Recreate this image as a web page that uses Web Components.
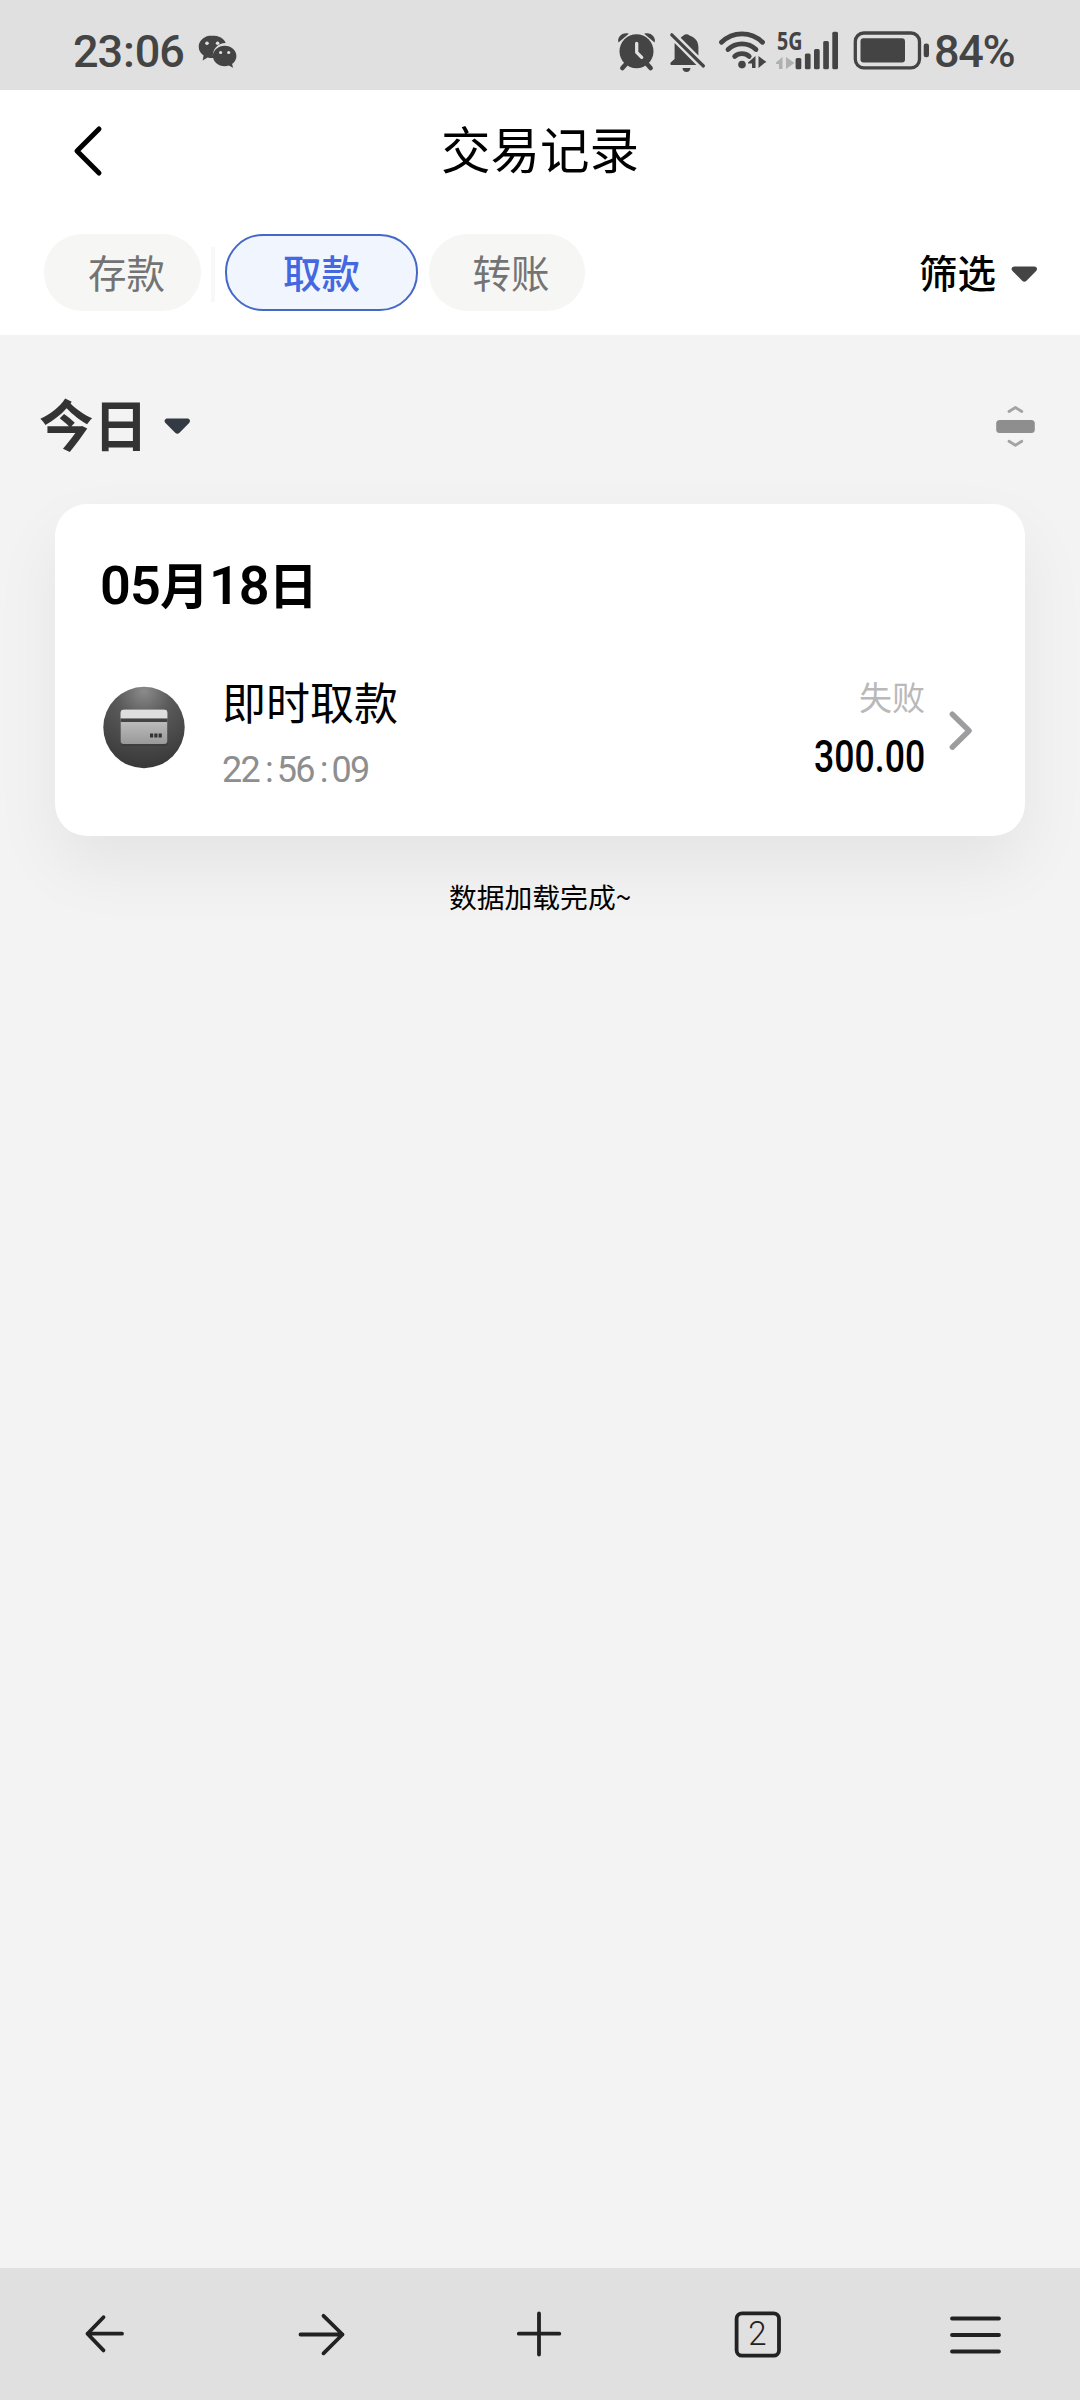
<!DOCTYPE html>
<html lang="zh-CN">
<head>
<meta charset="utf-8">
<title>交易记录</title>
<style>
html,body{margin:0;padding:0}
body{width:1080px;height:2400px;overflow:hidden;background:#f3f3f3;font-family:Roboto,"Noto Sans CJK SC",sans-serif;color:#000}
</style>
</head>
<body>
<record-page></record-page>
<script>
function define(name, html){
  const t=document.createElement('template');
  t.innerHTML=html;
  customElements.define(name,class extends HTMLElement{
    constructor(){super();this.attachShadow({mode:'open'}).append(t.content.cloneNode(true));}
  });
}

/* Icons: [x, y, width, height, markup]; the first four form the viewBox. */
const ICONS={
  wechat:[197,33,42,38,`<path fill="#444" d="M212 35.5c-7.4 0-13.3 4.9-13.3 11.2 0 3.8 2 6.6 4.9 8.8l-1 5 5-3.1c1.600.5 3 .6 4.700.6h1c-2-7.600 4-14.900 12.400-15 -1.300-4.400-7-7.500-13.700-7.500z"/><path fill="#444" d="M224.700 45.700c-6.400 0-11.800 4.400-11.800 10.200s5.400 10.300 11.800 10.300c1.500 0 2.900-.2 4.100-.6l4.300 2.100-1-3.800c2.600-1.900 4.300-4.700 4.300-8 0-5.800-5.200-10.200-11.700-10.200z"/><g fill="#e0e0e0"><circle cx="207" cy="43.300" r="1.800"/><circle cx="217.600" cy="43.300" r="1.800"/><circle cx="220.600" cy="52.500" r="1.600"/><circle cx="228.700" cy="52.500" r="1.600"/></g>`],
  alarm:[617,31,40,42,`<g fill="#444"><circle cx="636.500" cy="51.300" r="17"/><path d="M618.500 42.500c-2-5 4-11 10.300-8.700z"/><path d="M654.500 42.500c2-5-4-11-10.300-8.700z"/></g><path d="M626 64l-3.600 4M647 64l3.600 4" stroke="#444" stroke-width="4.600" stroke-linecap="round"/><path d="M636.700 43.300v9l5 5" fill="none" stroke="#e0e0e0" stroke-width="3.300" stroke-linecap="round" stroke-linejoin="round"/>`],
  mute:[669,30,38,43,`<path fill="#444" d="M683.500 35.500a4 4 0 0 1 5.900 0c5.600 1.600 9 6 9 11.500v8.500l-17.700-17.800c.8-1 1.700-1.700 2.800-2.200zM674.600 43l21.800 22H671c-1-1-.8-2.300.2-3.100l3.400-3z"/><path fill="#444" d="M682.500 68h8c-.3 2.500-1.700 4-4 4s-3.800-1.500-4-4z"/><path d="M671.800 34.800l31.600 31.200" stroke="#444" stroke-width="3.200" stroke-linecap="round"/>`],
  wifi:[718,30,50,42,`<g fill="none" stroke="#444" stroke-width="4.800" stroke-linecap="round"><path d="M721.500 42.300a29 29 0 0 1 41 0"/><path d="M728 49.500a20 20 0 0 1 28 0"/><path d="M734.700 56.400a11 11 0 0 1 14.500 0"/></g><circle cx="742" cy="64.600" r="3.800" fill="#444"/><path fill="#444" d="M748 62.500l7.500-6.500v12h-3.500v-4.500h-4zM758.500 56l8 6-2 1-6 5z"/>`],
  signal:[775,20,64,52,`<text x="777" y="50" font-family="Open Sans, sans-serif" font-weight="700" font-size="25" textLength="25.500" lengthAdjust="spacingAndGlyphs" fill="#444">5G</text><path fill="#b0b0b0" d="M776 62.500l6.500-5.500v12h-3.500v-5h-3zM786 57l8.500 6-1.500 1-7 5z"/><g fill="#444"><rect x="795.600" y="58" width="5.700" height="11.300" rx="1.500"/><rect x="804.900" y="53.500" width="5.700" height="15.800" rx="1.500"/><rect x="814" y="49" width="5.700" height="20.300" rx="1.500"/><rect x="823.200" y="41" width="5.700" height="28.300" rx="1.500"/><rect x="832.300" y="31.700" width="5.700" height="37.600" rx="1.500"/></g>`],
  battery:[852,30,79,42,`<rect x="855.300" y="33" width="64.200" height="34.800" rx="8.500" fill="none" stroke="#444" stroke-width="3.300"/><rect x="860.500" y="38.200" width="44.500" height="24.300" rx="3" fill="#444"/><rect x="923.700" y="43.500" width="5.300" height="13.700" rx="2.300" fill="#444"/>`],
  back:[70,120,40,62,`<path d="M100 129L78 151l22 22" fill="none" stroke="#000" stroke-width="5" stroke-linecap="round" stroke-linejoin="round"/>`],
  caret:[0,0,27,17,`<path d="M3.500.5h19.600c2.800 0 3.800 2.600 2 4.400L15.500 14.700c-1.500 1.400-2.900 1.400-4.300 0L1.500 4.900C-.3 3.100.7.500 3.500.5z" fill="currentColor"/>`],
  collapse:[995,404,41,45,`<rect x="996.200" y="420" width="38.600" height="13" rx="3.500" fill="#8e8e8e"/><path d="M1009 411.500l6.400-4 6.400 4M1009 441.300l6.400 4 6.400-4" fill="none" stroke="#a3a3a3" stroke-width="2.800" stroke-linecap="round" stroke-linejoin="round"/>`],
  card:[103,686,82,83,`<defs><radialGradient id="a" cx=".5" cy=".05" r=".95"><stop offset="0" stop-color="#8b8b8b"/><stop offset=".35" stop-color="#5b5b5b"/><stop offset="1" stop-color="#383838"/></radialGradient><linearGradient id="b" x1="0" y1="0" x2="0" y2="1"><stop offset="0" stop-color="#cecece"/><stop offset="1" stop-color="#999"/></linearGradient></defs><circle cx="144" cy="727.500" r="40.700" fill="url(#a)"/><rect x="121" y="711" width="47" height="35" rx="3" fill="#222" opacity=".25"/><rect x="120.700" y="709.700" width="46.600" height="34.300" rx="3" fill="url(#b)"/><path d="M120.700 718.500v-5.800a3 3 0 0 1 3-3h40.600a3 3 0 0 1 3 3v5.800z" fill="#dedede"/><path d="M120.700 718.500h46.600v3.500h-46.600z" fill="#424242"/><path d="M150 733.500h3.200v4H150zM154.300 733.500h3.200v4h-3.200zM158.600 733.500h3.200v4h-3.200z" fill="#333"/>`],
  next:[946,706,30,48,`<path d="M952.300 714.200l16.800 16.500-16.800 16.500" fill="none" stroke="#9d9d9f" stroke-width="5.400" stroke-linecap="round" stroke-linejoin="round"/>`],
  navBack:[0,2268,216,132,`<path d="M122 2333.700H87.500M103.500 2317.200L87.500 2333.700l16 16.700"/>`],
  navForward:[216,2268,216,132,`<path d="M300.500 2334.500h42M323.500 2315.800l19 18.700-19 18.800"/>`],
  navAdd:[432,2268,216,132,`<path d="M518.800 2333.700h40.500M539 2313.500v41"/>`],
  navTabs:[648,2268,216,132,`<rect x="736.600" y="2313.300" width="42.400" height="42.400" rx="5.500"/><text x="757.300" y="2345" text-anchor="middle" font-family="Roboto, sans-serif" font-weight="300" font-size="33" fill="#222" stroke="none">2</text>`],
  navMenu:[864,2268,216,132,`<path d="M952 2318.500h47M952 2335h47M952 2351.500h47"/>`]
};
customElements.define('ui-icon',class extends HTMLElement{
  connectedCallback(){
    if(this.shadowRoot)return;
    const n=this.getAttribute('name'),[x,y,w,h,m]=ICONS[n];
    const line=n.startsWith('nav')?'fill="none" stroke="#222" stroke-width="3.800" stroke-linecap="round" stroke-linejoin="round"':'';
    this.attachShadow({mode:'open'}).innerHTML=`<style>:host{display:block;flex:none;width:${w}px;height:${h}px}svg{display:block;overflow:visible}</style><svg width="${w}" height="${h}" viewBox="${x} ${y} ${w} ${h}" ${line}>${m}</svg>`;
  }
});

define('status-bar',`<style>
:host{display:flex;align-items:flex-start;height:90px;box-sizing:border-box;padding:20px 65px 0 73px;background:#e0e0e0;color:#444;font-weight:500;font-size:45px;line-height:42px}
.time{width:124px;white-space:nowrap;letter-spacing:-1.100px;margin-top:11px}
.time i{font-style:normal;margin:0 1px}
.wx{margin-top:13px}
.right{margin-left:auto;display:flex;align-items:flex-start}
.a{margin:11px 12px 0 0}.b{margin:10px 11px 0 0}.c{margin:10px 7px 0 0}.d{margin-right:13px}.e{margin:10px 3px 0 0}
.pct{width:81px;white-space:nowrap;letter-spacing:-1.300px;margin-top:11px}
</style><span class="time">23<i>:</i>06</span><ui-icon class="wx" name="wechat"></ui-icon>
<div class="right"><ui-icon class="a" name="alarm"></ui-icon><ui-icon class="b" name="mute"></ui-icon><ui-icon class="c" name="wifi"></ui-icon><ui-icon class="d" name="signal"></ui-icon><ui-icon class="e" name="battery"></ui-icon><span class="pct">84%</span></div>`);

define('title-bar',`<style>
:host{display:grid;grid-template-columns:109px 1fr 109px;align-items:center;height:122px;background:#fff}
ui-icon{justify-self:end}
h1{margin:0;padding-bottom:7px;text-align:center;font:400 49.500px/70px "Noto Sans CJK SC",sans-serif}
</style><ui-icon name="back"></ui-icon><h1><slot></slot></h1>`);

define('filter-chip',`<style>
:host{display:flex;box-sizing:border-box;width:157px;height:77px;border-radius:38px;align-items:center;justify-content:center;padding:0 0 4px 8px;background:#f6f6f4;color:#737373;font:400 38.500px/56px "Noto Sans CJK SC",sans-serif}
:host([active]){width:193px;padding:0 0 4px;background:#f1f6fe;border:2px solid #4568c8;color:#4468e0;font-weight:500}
</style><slot></slot>`);

define('filter-bar',`<style>
:host{display:flex;height:123px;box-sizing:border-box;padding:22px 42px 0 44px;background:#fff;align-items:flex-start}
.line{width:4px;height:55px;margin:13px 10px 0;background:#f8f8f8}
.last{margin-left:11px;width:156px}
.pick{margin-left:auto;height:77px;display:flex;align-items:center;gap:15px;font:500 38.500px/56px "Noto Sans CJK SC",sans-serif}
.pick span{padding-bottom:3px}
.pick ui-icon{color:#444;margin-top:4px}
</style><filter-chip>存款</filter-chip><span class="line"></span><filter-chip active>取款</filter-chip><filter-chip class="last">转账</filter-chip>
<div class="pick"><span>筛选</span><ui-icon name="caret"></ui-icon></div>`);

define('range-header',`<style>
:host{display:flex;align-items:center;height:169px;box-sizing:border-box;padding:13px 44px 0 39px}
span{font:600 54.500px/80px "Noto Sans CJK SC",sans-serif;color:#333;margin:0 16px 7px 0}
.c{color:#333a44}
.x{margin-left:auto}
</style><span><slot></slot></span><ui-icon class="c" name="caret"></ui-icon><ui-icon class="x" name="collapse"></ui-icon>`);

define('record-row',`<style>
:host{display:flex;align-items:flex-start}
.main{margin:-2px 0 0 37px;flex:1}
.side{text-align:right;margin:-1px 21px 0 0}
.name{font:400 44px/60px "Noto Sans CJK SC",sans-serif}
.time{font:400 36px/44px Roboto,sans-serif;color:#8e8e8e;letter-spacing:-1.800px;margin-top:17px}
.state{font:400 33px/48px "Noto Sans CJK SC",sans-serif;color:#b9b9b9}
.sum{font:500 44px/52px Roboto,sans-serif;transform:scaleX(.81);transform-origin:right;margin-top:11px}
.icon{margin-top:13px}.next{margin-top:33px}
</style><ui-icon class="icon" name="card"></ui-icon>
<div class="main"><div class="name"><slot name="name"></slot></div><div class="time"><slot name="time"></slot></div></div>
<div class="side"><div class="state"><slot name="state"></slot></div><div class="sum"><slot name="sum"></slot></div></div>
<ui-icon class="next" name="next"></ui-icon>`);

define('day-card',`<style>
:host{display:block;box-sizing:border-box;height:332px;margin:0 55px;padding:43px 49px 0 48px;border-radius:32px;background:#fff;box-shadow:0 30px 66px rgba(0,0,0,.062)}
h2{margin:-1px 0 53px -3px;height:74px;font:600 49px/74px "Noto Sans CJK SC",sans-serif}
</style><h2><slot name="day"></slot></h2><slot></slot>`);

define('nav-bar',`<style>:host{display:flex;height:132px;background:#e0e0e0}</style>
<ui-icon name="navBack"></ui-icon><ui-icon name="navForward"></ui-icon><ui-icon name="navAdd"></ui-icon><ui-icon name="navTabs"></ui-icon><ui-icon name="navMenu"></ui-icon>`);

define('record-page',`<style>
:host{display:flex;flex-direction:column;width:1080px;height:2400px;background:#f3f3f3}
main{flex:1}
p{margin:40px 0 0;text-align:center;font:400 27.800px/40px "Noto Sans CJK SC",sans-serif}
.t i{font-style:normal;margin:0 5px 0 6px}
.d b{font:600 54px/60px Roboto,sans-serif;letter-spacing:-.9px}
</style><status-bar></status-bar><title-bar>交易记录</title-bar><filter-bar></filter-bar>
<main><range-header>今日</range-header>
<day-card><span slot="day" class="d"><b>05</b>月<b>18</b>日</span><record-row><span slot="name">即时取款</span><span slot="time" class="t">22<i>:</i>56<i>:</i>09</span><span slot="state">失败</span><span slot="sum">300.00</span></record-row></day-card>
<p>数据加载完成~</p></main><nav-bar></nav-bar>`);
</script>
</body>
</html>
